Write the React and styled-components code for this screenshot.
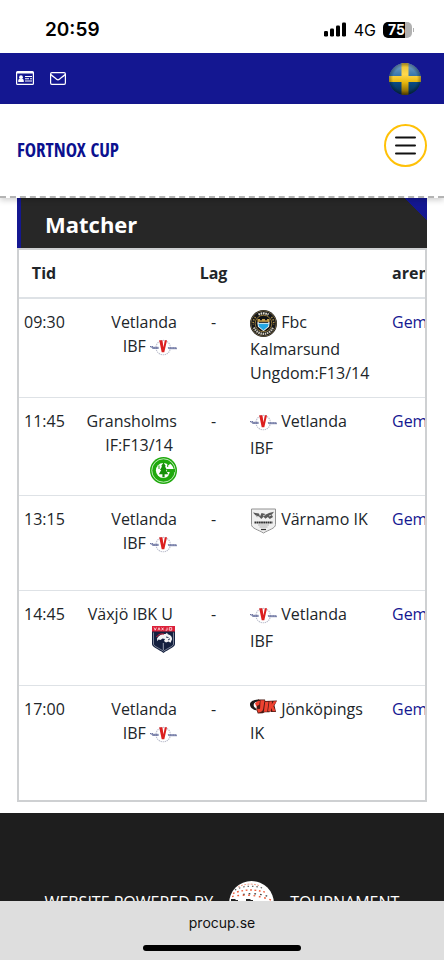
import React from 'react';
import styled, { createGlobalStyle } from 'styled-components';

const matches = [
  { time: '09:30', home: 'Vetlanda IBF', homeLogo: 'vetlanda', away: 'Fbc Kalmarsund Ungdom:F13/14', awayLogo: 'kalmarsund', arena: 'Gem', height: 99 },
  { time: '11:45', home: 'Gransholms IF:F13/14', homeLogo: 'gransholm', away: 'Vetlanda IBF', awayLogo: 'vetlanda', arena: 'Gem', height: 98 },
  { time: '13:15', home: 'Vetlanda IBF', homeLogo: 'vetlanda', away: 'Värnamo IK', awayLogo: 'varnamo', arena: 'Gem', height: 95 },
  { time: '14:45', home: 'Växjö IBK U', homeLogo: 'vaxjo', away: 'Vetlanda IBF', awayLogo: 'vetlanda', arena: 'Gem', height: 95 },
  { time: '17:00', home: 'Vetlanda IBF', homeLogo: 'vetlanda', away: 'Jönköpings IK', awayLogo: 'jik', arena: 'Gem', height: 114 },
];

const VetlandaLogo = () => (
  <Logo viewBox="0 0 27 27" width="27" height="27">
    <circle cx="13.2" cy="13.6" r="7.2" fill="none" stroke="#b9bccb" strokeWidth="1.1" strokeDasharray="1.3 0.8" />
    <path d="M0 12.8h8.500v2.200H3z" fill="#9aa0bf" />
    <path d="M17.500 13.200H25l2 .8v1.300h-8z" fill="#9aa0bf" />
    <path d="M0 12.600h3M2.500 14h6M18 14h9" stroke="#4d568c" strokeWidth="0.9" strokeDasharray="1.200 0.5" />
    <path d="M9.200 6.300h3.200l1.100 7 1.300-7h2.200l-2.700 12h-2.600z" fill="#dc1f1f" />
  </Logo>
);

const KalmarsundLogo = () => (
  <Logo viewBox="0 0 27 27" width="27" height="27">
    <circle cx="13.500" cy="13.500" r="13.500" fill="#15171b" />
    <circle cx="13.500" cy="13.500" r="12.700" fill="none" stroke="#8f7a48" strokeWidth="0.7" />
    <path d="M8.500 4.600a10.300 10.300 0 0 1 10 0" fill="none" stroke="#e4dfd0" strokeWidth="2.200" strokeDasharray="1.600 0.7" />
    <path d="M4 17.500a10.300 10.300 0 0 0 19 0" fill="none" stroke="#cfc9b8" strokeWidth="2.200" strokeDasharray="1.500 0.7" />
    <path d="M5.500 7A10.300 10.300 0 0 0 3.300 15M21.500 7a10.300 10.300 0 0 1 2.200 8" fill="none" stroke="#b19042" strokeWidth="1.600" strokeDasharray="1.200 1.500" />
    <circle cx="13.500" cy="13.500" r="8.300" fill="#111317" stroke="#b19042" strokeWidth="0.8" />
    <path d="M7.300 12.300h12.400l-.6 4.400-5.600 4.600-5.600-4.600z" fill="#f4f4ef" />
    <path d="M8.300 13.800h10.400l-.6 2.700-4.600 3.700-4.600-3.700z" fill="#24a8e6" />
    <path d="M7.500 9h2.500v1.300h2V9h3v1.300h2V9h2.500v3h-12z" fill="#c7a04b" />
    <path d="M9 12.300h9" stroke="#15171b" strokeWidth="1" />
  </Logo>
);

const GransholmLogo = () => (
  <Logo viewBox="0 0 27 27" width="27" height="27">
    <circle cx="13.500" cy="13.500" r="13.500" fill="#1fa90d" />
    <circle cx="13.500" cy="13.500" r="11.700" fill="none" stroke="#e4f7e1" strokeWidth="0.8" />
    <circle cx="13.300" cy="13.500" r="7.400" fill="#fff" />
    <path d="M17.500 9.500l2.600-2.800c1.800 1.300 3 3 3.600 5.300h-6z" fill="#fff" />
    <path d="M16.800 12h8.200v3h-2c-.3 2.300-1.300 4-2.600 5.300l-2.200-2c.9-.9 1.400-2 1.500-3.300h-2.900z" fill="#1fa90d" />
    <path d="M13.500 5.500l2.400 3.800h-1l2.100 3.700h-1.200l2.400 4.300h-3.600v3h-2.200v-3H8.800l2.400-4.300H10l2.100-3.700h-1z" fill="#16900a" />
    <path d="M9 8.500v3.500M17.700 7.500v2.500" stroke="#1fa90d" strokeWidth="1" />
  </Logo>
);

const VarnamoLogo = () => (
  <Logo viewBox="0 0 27 27" width="27" height="27">
    <path d="M1.500 2h24v15.500c0 4-7 5.300-12 8.500-5-3.200-12-4.500-12-8.500z" fill="#f0f0f0" stroke="#929292" strokeWidth="1" />
    <path d="M3 5.500l6 1 1 3 1.500-3.500 5 1.300L19 6l5-1.300-2.200 3 1.200 2.300-3.200 2-2-2-2.300 1.800-2-2-2.200 2.200L9 9.500l-2 .8z" fill="#595959" />
    <path d="M5 8.600l4 1.400M13 9l3-1.600M19 9l2.500-1" stroke="#ececec" strokeWidth="0.8" />
    <path d="M4.500 15.500h18" stroke="#303030" strokeWidth="2.200" strokeDasharray="1.800 0.400" />
    <path d="M8 18h11M9.500 20h8" stroke="#b4b4b4" strokeWidth="1" />
    <path d="M11 22.500h5" stroke="#333" strokeWidth="1.200" />
  </Logo>
);

const VaxjoLogo = () => (
  <Logo viewBox="0 0 27 27" width="27" height="27">
    <path d="M2 0h23v18c0 3.500-6.500 5-11.500 9C8.500 23 2 21.500 2 18z" fill="#14203f" />
    <path d="M2 0h23v5.500H2z" fill="#dc2039" />
    <path d="M4 1.500l1.200 2.700 1.200-2.700M8 4.300l1-2.600 1 2.600M11.600 1.600l2 2.700m0-2.700l-2 2.700M15.500 4.200h1.600V1.600M19.300 1.600h2.400v2.600h-2.400z" fill="none" stroke="#fff" strokeWidth="0.700" />
    <path d="M3.500 6.500v11.500c0 2.200 5 3.800 10 7.200 5-3.400 10-5 10-7.200V6.500" fill="none" stroke="#c5c9d4" strokeWidth="0.600" />
    <path d="M7 12.500c2-3.500 5-4.700 8.500-4.500l1.500-1.200.8 1.400c3 .6 4.200 2.500 4.300 5l-1.600 3.600-2-1.400-2.500 1.200-2-1.600 1-2-2.500-.6-2 1.600-2-.4-1.200 1.600z" fill="#f3f3f5" />
    <path d="M6.500 11c2-3 5-3.500 7.500-2.800" fill="none" stroke="#dc2039" strokeWidth="1" />
    <path d="M16 11l2.500.6M18 14l2-1.200" stroke="#14203f" strokeWidth="0.900" />
    <path d="M13.300 17v7" stroke="#a7aec0" strokeWidth="0.900" />
  </Logo>
);

const JikLogo = () => (
  <Logo viewBox="0 0 27 16" width="27" height="16" $baseline>
    <path d="M9 .6C4 .5 0 2.500 0 5.500c0 3.200 3 5 6.500 6L5.600 9C4 8 3.500 6.900 3.700 5.700 4 3.700 6 2.500 9 2.600z" fill="#1a1a1a" />
    <path d="M8 .6h7l.3 1.400L27 1.500l-2.500 5L26 13h-5l-1-1-.5 1.300h-4.700l-2 .9-5 .2-1.500-4z" fill="#4a1a14" />
    <path d="M10.500 1.300h4.100l-1.400 8.500c-.5 2.700-2 3.600-5.200 3.600l-1-3.600 2 .2c.8 0 1-.3 1.100-1z" fill="#ef4230" />
    <path d="M15.200 2.700h3.400L17.200 12.700h-3.400zM19.400 2.400h2.700l-.4 3 2-3.200h3l-3.300 5 2.200 5h-3l-1.400-3.300-.4 3.300h-2.800z" fill="#ef4230" />
    <path d="M5 4.200c1.500-1.700 3-2.300 5-2.300l-.8 4c-1.500 0-2.200.9-2.700 2z" fill="#ef4230" />
  </Logo>
);

const logos = {
  vetlanda: VetlandaLogo,
  kalmarsund: KalmarsundLogo,
  gransholm: GransholmLogo,
  varnamo: VarnamoLogo,
  vaxjo: VaxjoLogo,
  jik: JikLogo,
};

const SignalIcon = () => (
  <svg width="23" height="15" viewBox="0 0 23 15">
    <rect x="0" y="9" width="4" height="5.500" rx="1.200" />
    <rect x="6" y="6.500" width="4" height="8" rx="1.200" />
    <rect x="12" y="3.500" width="4" height="11" rx="1.200" />
    <rect x="18" y="0.500" width="4" height="14" rx="1.200" />
  </svg>
);

const CardIcon = () => (
  <svg width="18" height="15" viewBox="0 0 18 15" fill="#fff">
    <path fillRule="evenodd" d="M1.500 0h15A1.500 1.500 0 0 1 18 1.500v11a1.500 1.500 0 0 1-1.500 1.500h-15A1.500 1.500 0 0 1 0 12.500v-11A1.500 1.500 0 0 1 1.500 0zM1.200 2.500v10.200h15.600V2.500z" />
    <circle cx="5" cy="6.200" r="1.900" />
    <path d="M2.200 11V9.800c0-1.300 1-2 1.700-2 .7.500 1.500.5 2.200 0 .8 0 1.700.7 1.700 2V11z" />
    <path d="M9 5h7v1H9zM9 7.200h4v1H9zM14 7.200h2v1h-2zM9 9.500h7v1H9z" />
  </svg>
);

const MailIcon = () => (
  <svg width="16" height="13" viewBox="0 0 16 13" fill="none" stroke="#fff" strokeWidth="1.200">
    <rect x="0.600" y="0.600" width="14.800" height="11.800" rx="1.300" />
    <path d="M.8 2.500c2 1.900 4 3.200 5.800 4.700.9.800 1.900.8 2.800 0 1.800-1.500 3.800-2.800 5.800-4.700" />
  </svg>
);

const SwedishFlag = () => (
  <svg width="32" height="32" viewBox="0 0 32 32">
    <defs>
      <clipPath id="ball"><circle cx="16" cy="16" r="16" /></clipPath>
      <linearGradient id="blue" x1="0" y1="0" x2="0" y2="1">
        <stop offset="0" stopColor="#7da6ca" />
        <stop offset="0.450" stopColor="#2d6fa8" />
        <stop offset="0.550" stopColor="#0b4f8c" />
        <stop offset="1" stopColor="#062a4c" />
      </linearGradient>
      <linearGradient id="yellow" x1="0" y1="0" x2="0" y2="1">
        <stop offset="0" stopColor="#e2bd2f" />
        <stop offset="0.350" stopColor="#ffd94f" />
        <stop offset="0.600" stopColor="#e9b90f" />
        <stop offset="1" stopColor="#6d5200" />
      </linearGradient>
      <radialGradient id="edge">
        <stop offset="0.750" stopColor="#000" stopOpacity="0" />
        <stop offset="1" stopColor="#000" stopOpacity="0.350" />
      </radialGradient>
    </defs>
    <g clipPath="url(#ball)">
      <rect width="32" height="32" fill="url(#blue)" />
      <path d="M12.500 0h7v13H32v6H19.500v13h-7V19H0v-6h12.500z" fill="url(#yellow)" />
      <circle cx="16" cy="16" r="16" fill="url(#edge)" />
    </g>
  </svg>
);

const MenuIcon = () => (
  <svg width="21" height="19" viewBox="0 0 21 19" stroke="#111" strokeWidth="2" strokeLinecap="round">
    <path d="M1 1.500h19M1 9.500h19M1 17.500h19" />
  </svg>
);

const ProcupBall = () => (
  <svg width="45" height="45" viewBox="0 0 45 45">
    <circle cx="22.500" cy="22.500" r="22.500" fill="#fff" />
    <g fill="none" strokeWidth="1.400">
      <path d="M9 6C15 3 22 2 30 4.500" stroke="#ef9a82" strokeDasharray="2 1.300" strokeWidth="0.900" />
      <path d="M6 9c8-4.500 19-5 29-1.500" stroke="#555" strokeDasharray="1.400 3" strokeWidth="1.200" />
      <path d="M4 12.500c9-4 22-5 34.500-.5" stroke="#ee6140" strokeDasharray="1.800 2.600" />
      <path d="M14 13.500c8-1.500 18-1 26.500 2.500" stroke="#444" strokeDasharray="1.700 4" />
      <path d="M3 15.500c12-2.500 26-1.500 39 3.500" stroke="#ee6140" strokeDasharray="1.800 3.600" />
    </g>
    <path d="M2 18h4.500v1H9v9H6.500v-5H2zM17 18h4.500v1H24v3h-3v6h-4z" fill="#222" />
  </svg>
);

const Team = ({ name, logo, logoFirst }) => {
  const TeamLogo = logos[logo];

  return logoFirst ? (
    <>
      <TeamLogo /> {name}
    </>
  ) : (
    <>
      {name}&nbsp;
      <TeamLogo />
    </>
  );
};

const Match = ({ match }) => {
  const { time, home, homeLogo, away, awayLogo, arena, height } = match;

  return (
    <Row $height={height}>
      <Cell>{time}</Cell>
      <HomeCell>
        <Team name={home} logo={homeLogo} />
      </HomeCell>
      <Cell $align="center">-</Cell>
      <AwayCell>
        <Team name={away} logo={awayLogo} logoFirst />
      </AwayCell>
      <Cell>
        <ArenaLink href="#arena">{arena}</ArenaLink>
      </Cell>
    </Row>
  );
};

const App = () => (
  <>
    <GlobalStyle />
    <Page>
      <StatusBar>
        <Clock>20:59</Clock>
        <StatusRight>
          <SignalIcon />
          <span>4G</span>
          <Battery>
            <BatteryLevel>75</BatteryLevel>
          </Battery>
        </StatusRight>
      </StatusBar>

      <TopBar>
        <TopLinks>
          <IconLink href="#contact" aria-label="Kontakt">
            <CardIcon />
          </IconLink>
          <IconLink href="#mail" aria-label="E-post">
            <MailIcon />
          </IconLink>
        </TopLinks>
        <IconLink href="#language" aria-label="Svenska">
          <SwedishFlag />
        </IconLink>
      </TopBar>

      <Navbar>
        <Brand href="#home">FORTNOX CUP</Brand>
        <MenuButton type="button" aria-label="Meny">
          <MenuIcon />
        </MenuButton>
      </Navbar>

      <Main>
        <Title>Matcher</Title>
        <TableWrap>
          <Table>
            <colgroup>
              <Col $width={50} />
              <Col $width={113} />
              <Col $width={63} />
              <Col $width={142} />
              <Col $width={132} />
            </colgroup>
            <thead>
              <Row $height={49}>
                <HeadCell $align="center">Tid</HeadCell>
                <HeadCell />
                <HeadCell $align="center">Lag</HeadCell>
                <HeadCell />
                <HeadCell>arena</HeadCell>
              </Row>
            </thead>
            <tbody>
              {matches.map((match) => (
                <Match key={match.time} match={match} />
              ))}
            </tbody>
          </Table>
        </TableWrap>
      </Main>

      <Footer>
        <span>WEBSITE POWERED BY</span>
        <ProcupBall />
        <span>TOURNAMENT</span>
      </Footer>

      <BrowserBar>
        <span>procup.se</span>
        <HomeIndicator />
      </BrowserBar>
    </Page>
  </>
);

export default App;

const GlobalStyle = createGlobalStyle`
  * {
    box-sizing: border-box;
  }

  body {
    margin: 0;
    background: #fff;
    color: #212529;
    font: 16px/24px 'Open Sans', 'Noto Sans', sans-serif;
  }

  svg {
    flex: none;
  }
`;

const Page = styled.div`
  display: flex;
  flex-direction: column;
  min-height: 100vh;
`;

const StatusBar = styled.div`
  display: flex;
  align-items: center;
  justify-content: space-between;
  height: 53px;
  padding: 6px 32px 0 45px;
  color: #000;
  font-family: Inter, sans-serif;
`;

const Clock = styled.span`
  font-size: 19px;
  font-weight: 600;
`;

const StatusRight = styled.div`
  display: flex;
  align-items: center;
  gap: 7px;
`;

const Battery = styled.div`
  display: flex;
  align-items: center;
  width: 29px;
  height: 16px;
  border-radius: 5px;
  background: linear-gradient(90deg, #000 75%, #b1b1b1 75%);
  position: relative;

  &::after {
    content: '';
    position: absolute;
    right: -2px;
    top: 6px;
    width: 1px;
    height: 4px;
    background: #b1b1b1;
  }
`;

const BatteryLevel = styled.span`
  padding-left: 5px;
  color: #fff;
  font-size: 14px;
  font-weight: 700;
  line-height: 16px;
`;

const TopBar = styled.div`
  display: flex;
  align-items: center;
  justify-content: space-between;
  height: 51px;
  padding: 0 23px 0 16px;
  background: #141791;
`;

const TopLinks = styled.div`
  display: flex;
  align-items: center;
  gap: 16px;
`;

const IconLink = styled.a`
  display: flex;
`;

const Navbar = styled.nav`
  display: flex;
  align-items: flex-end;
  justify-content: space-between;
  padding: 20px 17px 29px;
  border-bottom: 2px dashed #b4b4b4;
  background: #fff;
  box-shadow: 0 2px 6px rgba(0, 0, 0, 0.2);
  position: relative;
  z-index: 1;
`;

const Brand = styled.a`
  color: #0b108f;
  font: bold 19px/33px 'Liberation Sans Narrow', 'Open Sans Condensed', 'DejaVu Sans Condensed', sans-serif;
  text-decoration: none;
`;

const MenuButton = styled.button`
  display: flex;
  align-items: center;
  justify-content: center;
  width: 43px;
  height: 43px;
  padding: 0;
  border: 2px solid #ffc107;
  border-radius: 50%;
  background: #fff;
`;

const Main = styled.main`
  margin: 0 17px 11px;
`;

const Title = styled.h1`
  margin: 0;
  padding: 2px 24px 0;
  border-left: 4px solid #141791;
  background: linear-gradient(225deg, #141791 16px, #272727 16px);
  color: #fff;
  font-size: 22px;
  font-weight: 700;
  line-height: 48px;
`;

const TableWrap = styled.div`
  overflow-x: auto;
  border: 2px solid #ced0d2;
  scrollbar-width: none;
`;

const Table = styled.table`
  width: 500px;
  border-spacing: 0;
  table-layout: fixed;
`;

const Col = styled.col`
  width: ${({ $width }) => $width}px;
`;

const Row = styled.tr`
  height: ${({ $height }) => $height}px;
`;

const Cell = styled.td`
  padding: 11px 5px;
  border-bottom: 1px solid #dee2e6;
  text-align: ${({ $align }) => $align || 'left'};
  vertical-align: top;

  tr:last-child > & {
    border-bottom: 0;
  }
`;

const HomeCell = styled(Cell)`
  padding-left: 17px;
  text-align: right;
`;

const AwayCell = styled(Cell)`
  padding-right: 15px;
`;

const HeadCell = styled.th`
  padding: 11px 5px;
  border-bottom: 2px solid #dee2e6;
  font-weight: 700;
  text-align: ${({ $align }) => $align || 'left'};
  vertical-align: top;
`;

const ArenaLink = styled.a`
  color: #141791;
  text-decoration: none;
`;

const Logo = styled.svg`
  vertical-align: ${({ $baseline }) => ($baseline ? 'baseline' : 'middle')};
`;

const Footer = styled.footer`
  display: flex;
  flex: 1;
  align-items: flex-start;
  justify-content: center;
  gap: 16px;
  padding: 68px 16px 24px;
  background: #1e1e1e;
  color: #fff;
  font-weight: 400;
  line-height: 43px;
`;

/* stays on top of the page while it scrolls */
const BrowserBar = styled.div`
  position: fixed;
  right: 0;
  bottom: 0;
  left: 0;
  z-index: 2;
  display: flex;
  flex-direction: column;
  align-items: center;
  gap: 10px;
  padding: 10px 0 9px;
  background: #dedede;
  color: #111;
  font-family: Inter, sans-serif;
  font-size: 14px;
`;

const HomeIndicator = styled.div`
  width: 158px;
  height: 6px;
  border-radius: 3px;
  background: #000;
`;
